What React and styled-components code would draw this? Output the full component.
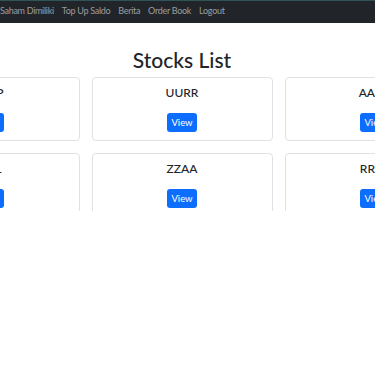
import React from "react";
import styled, { createGlobalStyle } from "styled-components";

const GlobalStyle = createGlobalStyle`
  html, body {
    margin: 0;
    padding: 0;
    background: #fff;
    overflow-x: hidden;
  }
  body {
    font-family: Lato, "Noto Sans", sans-serif;
    color: #212529;
  }
`;

// ---- navbar
const Navbar = styled.nav`
  background: #212529;
  border-top: 1px solid #2e5457;
  height: 22px;
  box-sizing: content-box;
  padding-top: 0;
`;

const NavList = styled.ul`
  list-style: none;
  margin: 0;
  padding: 4px 0 0;
  display: flex;
  gap: 8px;
`;

const NavLink = styled.a`
  display: block;
  color: rgba(255, 255, 255, 0.55);
  font-size: 9px;
  line-height: 11px;
  letter-spacing: -0.3px;
  text-decoration: none;
  white-space: nowrap;
`;

// ---- page
const Main = styled.main`
  display: flex;
  flex-direction: column;
  align-items: center;
  padding-right: 11px;
  padding-top: 24px;
`;

const Title = styled.h1`
  font-size: 21px;
  font-weight: 500;
  margin: 0 0 4px;
  line-height: 26px;
`;

const Grid = styled.div`
  display: grid;
  grid-template-columns: repeat(3, 181px);
  gap: 12px;
  height: 134px;
  overflow: hidden;
  flex-shrink: 0;
`;

const Card = styled.div`
  border: 1px solid #dee2e6;
  border-radius: 4px;
  height: 64px;
  box-sizing: border-box;
  display: flex;
  flex-direction: column;
  align-items: center;
  padding-top: 8px;
`;

const CardTitle = styled.h5`
  margin: 0;
  font-size: 12px;
  font-weight: 500;
  line-height: 14px;
`;

const Button = styled.button`
  margin-top: 13px;
  width: 30px;
  height: 19px;
  padding: 0;
  border: none;
  border-radius: 3px;
  background: #0d6efd;
  color: #fff;
  font-family: inherit;
  font-size: 9.5px;
`;

const links = ["Saham Dimiliki", "Top Up Saldo", "Berita", "Order Book", "Logout"];
const stocks = ["PPPP", "UURR", "AAAA", "LLLL", "ZZAA", "RRRR"];

export default function App() {
  return (
    <>
      <GlobalStyle />
      <Navbar>
        <NavList>
          {links.map((l) => (
            <li key={l}>
              <NavLink href="#">{l}</NavLink>
            </li>
          ))}
        </NavList>
      </Navbar>
      <Main>
        <Title>Stocks List</Title>
        <Grid>
          {stocks.map((s) => (
            <Card key={s}>
              <CardTitle>{s}</CardTitle>
              <Button>View</Button>
            </Card>
          ))}
        </Grid>
      </Main>
    </>
  );
}
